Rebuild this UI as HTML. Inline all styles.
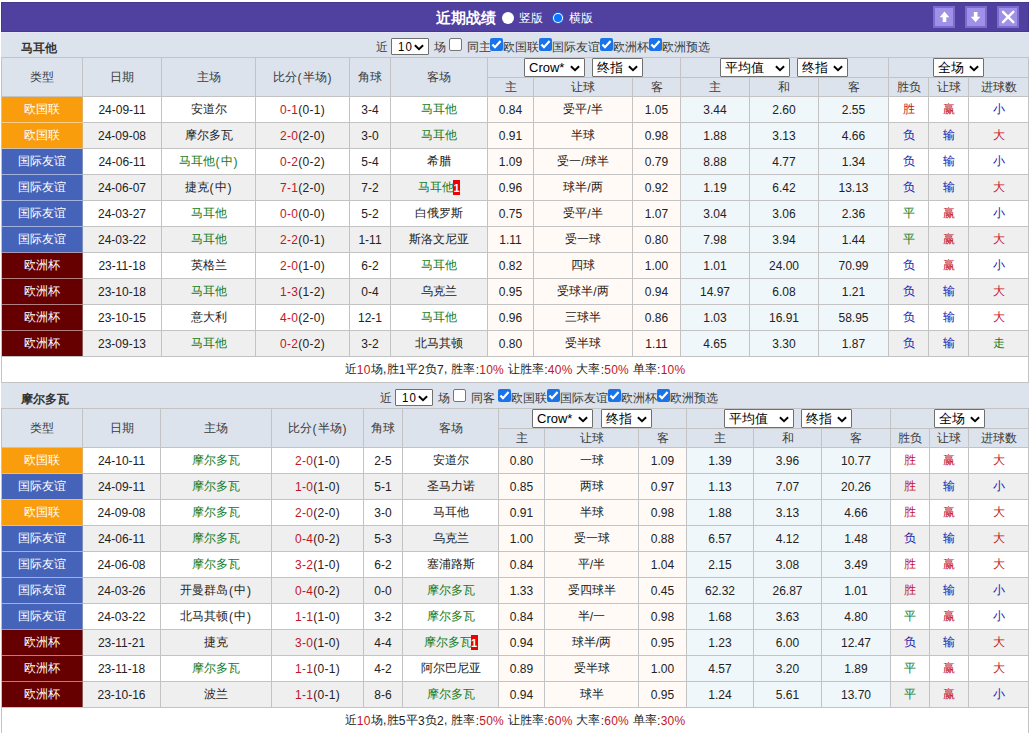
<!DOCTYPE html>
<html><head><meta charset="utf-8"><style>
html,body{margin:0;padding:0;background:#fff;width:1030px;height:733px;overflow:hidden}
body{position:relative;font-family:"Liberation Sans",sans-serif;font-size:12px;font-weight:500;color:#222222}
div{position:absolute;box-sizing:content-box}
.c{text-align:center;white-space:nowrap;overflow:hidden;font-weight:500}
.n{position:relative;top:1px}
.p{margin:0 0.9px}
.sc .n{letter-spacing:0.3px}
.r{color:#c2151f}
.g{color:#137a1a}
.b{color:#1818b0}
.badge{display:inline-block;background:#e00;color:#fff;font-weight:bold;font-size:11px;line-height:15px;width:7px;text-align:center;vertical-align:middle;margin-left:-1px}
.sel{background:#fff;border:1px solid #6f6f6f;border-radius:1px;color:#000;padding-left:4px;box-sizing:border-box;font-weight:400}
</style></head><body>
<div style="left:1px;top:2px;width:1028px;height:30px;background:#5040a0;box-shadow:inset 1px 1px 0 #45398e, inset -1px -1px 0 #45398e"></div><div style="left:1px;top:32px;width:1028px;height:1px;background:#e6e6f8"></div><div style="left:436px;top:8px;white-space:nowrap;color:#fff;font-weight:bold;font-size:15px;line-height:20px">近期战绩</div><div style="left:502px;top:12px;width:12px;height:12px;background:#fff;border-radius:50%"></div><div style="left:519px;top:9px;white-space:nowrap;color:#fff;font-size:12px;line-height:18px">竖版</div><div style="left:552px;top:12px;width:12px;height:12px;background:#2a62d8;border-radius:50%"><div style="left:1px;top:1px;width:10px;height:10px;border-radius:50%;background:#fff"></div><div style="left:2px;top:2px;width:8px;height:8px;border-radius:50%;background:#0a75ff"></div></div><div style="left:569px;top:9px;white-space:nowrap;color:#fff;font-size:12px;line-height:18px">横版</div><div style="left:933px;top:6px;width:22px;height:22px;background:#7a6bcc"><div style="left:2px;top:2px;width:18px;height:18px;background:#a090e8"></div><svg width="22" height="22" viewBox="0 0 22 22" style="position:absolute;left:0;top:0"><path d="M11.5 5.6 L16.3 11.2 L13.3 11.2 L13.3 16 L9.7 16 L9.7 11.2 L6.7 11.2 Z" fill="#fff"/></svg></div><div style="left:965px;top:6px;width:22px;height:22px;background:#7a6bcc"><div style="left:2px;top:2px;width:18px;height:18px;background:#a090e8"></div><svg width="22" height="22" viewBox="0 0 22 22" style="position:absolute;left:0;top:0"><path d="M10.6 16.2 L15.4 10.8 L12.5 10.8 L12.5 6 L8.8 6 L8.8 10.8 L5.8 10.8 Z" fill="#fff"/></svg></div><div style="left:997px;top:6px;width:22px;height:22px;background:#7a6bcc"><div style="left:2px;top:2px;width:18px;height:18px;background:#a090e8"></div><svg width="22" height="22" viewBox="0 0 22 22" style="position:absolute;left:0;top:0"><path d="M6 5.8 L16.3 16.2 M16.3 5.8 L6 16.2" fill="none" stroke="#fff" stroke-width="2.4" stroke-linecap="round"/></svg></div><div style="left:1px;top:33px;width:1028px;height:24px;background:#dce3ec"></div><div style="left:21px;top:38px;white-space:nowrap;font-weight:bold;font-size:12px;line-height:20px;color:#333">马耳他</div><div style="left:376px;top:38px;white-space:nowrap;font-size:12px;line-height:18px;color:#3a3a3a">近</div><div class="sel" style="left:391px;top:38px;width:38px;height:17px;font-size:13px;line-height:16px"><span style="display:inline-block;font-size:13px;letter-spacing:1.3px;transform:scaleX(0.88);transform-origin:0 50%;position:relative;left:2px">10</span><svg width="10" height="7" viewBox="0 0 10 7" style="position:absolute;right:4px;top:5px"><path d="M0.9 1.2 L5 5.2 L9.1 1.2" fill="none" stroke="#000" stroke-width="1.9"/></svg></div><div style="left:434px;top:38px;white-space:nowrap;font-size:12px;line-height:18px;color:#3a3a3a">场</div><div style="left:449px;top:38px;width:11px;height:11px;background:#fff;border:1px solid #767676;border-radius:2px"></div><div style="left:467px;top:38px;white-space:nowrap;font-size:12px;line-height:18px;color:#3a3a3a">同主</div><div style="left:490px;top:38px;width:13px;height:13px;background:#1a73e8;border-radius:2px"><svg width="13" height="13" viewBox="0 0 13 13" style="position:absolute;left:0;top:0"><path d="M2.4 6.4 L5 9.2 L10.6 3" fill="none" stroke="#fff" stroke-width="2.2"/></svg></div><div style="left:503px;top:38px;white-space:nowrap;font-size:12px;line-height:18px;color:#3a3a3a">欧国联</div><div style="left:539px;top:38px;width:13px;height:13px;background:#1a73e8;border-radius:2px"><svg width="13" height="13" viewBox="0 0 13 13" style="position:absolute;left:0;top:0"><path d="M2.4 6.4 L5 9.2 L10.6 3" fill="none" stroke="#fff" stroke-width="2.2"/></svg></div><div style="left:552px;top:38px;white-space:nowrap;font-size:12px;line-height:18px;color:#3a3a3a">国际友谊</div><div style="left:600px;top:38px;width:13px;height:13px;background:#1a73e8;border-radius:2px"><svg width="13" height="13" viewBox="0 0 13 13" style="position:absolute;left:0;top:0"><path d="M2.4 6.4 L5 9.2 L10.6 3" fill="none" stroke="#fff" stroke-width="2.2"/></svg></div><div style="left:613px;top:38px;white-space:nowrap;font-size:12px;line-height:18px;color:#3a3a3a">欧洲杯</div><div style="left:649px;top:38px;width:13px;height:13px;background:#1a73e8;border-radius:2px"><svg width="13" height="13" viewBox="0 0 13 13" style="position:absolute;left:0;top:0"><path d="M2.4 6.4 L5 9.2 L10.6 3" fill="none" stroke="#fff" stroke-width="2.2"/></svg></div><div style="left:662px;top:38px;white-space:nowrap;font-size:12px;line-height:18px;color:#3a3a3a">欧洲预选</div><div style="left:1px;top:57px;width:1027px;height:39px;background:#dce3ec"></div><div style="left:1px;top:96px;width:1027px;height:26px;background:#ffffff"></div><div style="left:488px;top:96px;width:192px;height:26px;background:#fffaf6"></div><div style="left:681px;top:96px;width:207px;height:26px;background:#f0f7fb"></div><div style="left:2px;top:97px;width:80px;height:25px;background:#fa9d0c"></div><div style="left:1px;top:122px;width:1027px;height:26px;background:#efefef"></div><div style="left:488px;top:122px;width:192px;height:26px;background:#fffaf6"></div><div style="left:681px;top:122px;width:207px;height:26px;background:#f0f7fb"></div><div style="left:2px;top:123px;width:80px;height:25px;background:#fa9d0c"></div><div style="left:1px;top:148px;width:1027px;height:26px;background:#ffffff"></div><div style="left:488px;top:148px;width:192px;height:26px;background:#fffaf6"></div><div style="left:681px;top:148px;width:207px;height:26px;background:#f0f7fb"></div><div style="left:2px;top:149px;width:80px;height:25px;background:#4563b9"></div><div style="left:1px;top:174px;width:1027px;height:26px;background:#efefef"></div><div style="left:488px;top:174px;width:192px;height:26px;background:#fffaf6"></div><div style="left:681px;top:174px;width:207px;height:26px;background:#f0f7fb"></div><div style="left:2px;top:175px;width:80px;height:25px;background:#4563b9"></div><div style="left:1px;top:200px;width:1027px;height:26px;background:#ffffff"></div><div style="left:488px;top:200px;width:192px;height:26px;background:#fffaf6"></div><div style="left:681px;top:200px;width:207px;height:26px;background:#f0f7fb"></div><div style="left:2px;top:201px;width:80px;height:25px;background:#4563b9"></div><div style="left:1px;top:226px;width:1027px;height:26px;background:#efefef"></div><div style="left:488px;top:226px;width:192px;height:26px;background:#fffaf6"></div><div style="left:681px;top:226px;width:207px;height:26px;background:#f0f7fb"></div><div style="left:2px;top:227px;width:80px;height:25px;background:#4563b9"></div><div style="left:1px;top:252px;width:1027px;height:26px;background:#ffffff"></div><div style="left:488px;top:252px;width:192px;height:26px;background:#fffaf6"></div><div style="left:681px;top:252px;width:207px;height:26px;background:#f0f7fb"></div><div style="left:2px;top:253px;width:80px;height:25px;background:#660000"></div><div style="left:1px;top:278px;width:1027px;height:26px;background:#efefef"></div><div style="left:488px;top:278px;width:192px;height:26px;background:#fffaf6"></div><div style="left:681px;top:278px;width:207px;height:26px;background:#f0f7fb"></div><div style="left:2px;top:279px;width:80px;height:25px;background:#660000"></div><div style="left:1px;top:304px;width:1027px;height:26px;background:#ffffff"></div><div style="left:488px;top:304px;width:192px;height:26px;background:#fffaf6"></div><div style="left:681px;top:304px;width:207px;height:26px;background:#f0f7fb"></div><div style="left:2px;top:305px;width:80px;height:25px;background:#660000"></div><div style="left:1px;top:330px;width:1027px;height:26px;background:#efefef"></div><div style="left:488px;top:330px;width:192px;height:26px;background:#fffaf6"></div><div style="left:681px;top:330px;width:207px;height:26px;background:#f0f7fb"></div><div style="left:2px;top:331px;width:80px;height:25px;background:#660000"></div><div style="left:1px;top:356px;width:1027px;height:26px;background:#fff"></div><div style="left:1px;top:57px;width:1028px;height:1px;background:#c3c3c3"></div><div style="left:487px;top:77px;width:542px;height:1px;background:#c3c3c3"></div><div style="left:1px;top:96px;width:1028px;height:1px;background:#c3c3c3"></div><div style="left:1px;top:122px;width:1028px;height:1px;background:#c3c3c3"></div><div style="left:1px;top:148px;width:1028px;height:1px;background:#c3c3c3"></div><div style="left:1px;top:174px;width:1028px;height:1px;background:#c3c3c3"></div><div style="left:1px;top:200px;width:1028px;height:1px;background:#c3c3c3"></div><div style="left:1px;top:226px;width:1028px;height:1px;background:#c3c3c3"></div><div style="left:1px;top:252px;width:1028px;height:1px;background:#c3c3c3"></div><div style="left:1px;top:278px;width:1028px;height:1px;background:#c3c3c3"></div><div style="left:1px;top:304px;width:1028px;height:1px;background:#c3c3c3"></div><div style="left:1px;top:330px;width:1028px;height:1px;background:#c3c3c3"></div><div style="left:1px;top:356px;width:1028px;height:1px;background:#c3c3c3"></div><div style="left:1px;top:382px;width:1028px;height:1px;background:#c3c3c3"></div><div style="left:1px;top:57px;width:1px;height:326px;background:#c3c3c3"></div><div style="left:82px;top:57px;width:1px;height:300px;background:#c3c3c3"></div><div style="left:161px;top:57px;width:1px;height:300px;background:#c3c3c3"></div><div style="left:255px;top:57px;width:1px;height:300px;background:#c3c3c3"></div><div style="left:349px;top:57px;width:1px;height:300px;background:#c3c3c3"></div><div style="left:390px;top:57px;width:1px;height:300px;background:#c3c3c3"></div><div style="left:487px;top:57px;width:1px;height:300px;background:#c3c3c3"></div><div style="left:533px;top:77px;width:1px;height:280px;background:#c3c3c3"></div><div style="left:632px;top:77px;width:1px;height:280px;background:#c3c3c3"></div><div style="left:680px;top:57px;width:1px;height:300px;background:#c3c3c3"></div><div style="left:749px;top:77px;width:1px;height:280px;background:#c3c3c3"></div><div style="left:818px;top:77px;width:1px;height:280px;background:#c3c3c3"></div><div style="left:888px;top:57px;width:1px;height:300px;background:#c3c3c3"></div><div style="left:928px;top:77px;width:1px;height:280px;background:#c3c3c3"></div><div style="left:968px;top:77px;width:1px;height:280px;background:#c3c3c3"></div><div style="left:1028px;top:57px;width:1px;height:326px;background:#c3c3c3"></div><div style="left:82px;top:97px;width:1px;height:25px;background:#e1ae5e"></div><div style="left:82px;top:123px;width:1px;height:25px;background:#e1ae5e"></div><div style="left:2px;top:122px;width:81px;height:1px;background:#fcce86"></div><div style="left:82px;top:149px;width:1px;height:25px;background:#7e8ebe"></div><div style="left:2px;top:148px;width:81px;height:1px;background:#d0c0b0"></div><div style="left:82px;top:175px;width:1px;height:25px;background:#7e8ebe"></div><div style="left:2px;top:174px;width:81px;height:1px;background:#a2b1dc"></div><div style="left:82px;top:201px;width:1px;height:25px;background:#7e8ebe"></div><div style="left:2px;top:200px;width:81px;height:1px;background:#a2b1dc"></div><div style="left:82px;top:227px;width:1px;height:25px;background:#7e8ebe"></div><div style="left:2px;top:226px;width:81px;height:1px;background:#a2b1dc"></div><div style="left:82px;top:253px;width:1px;height:25px;background:#905858"></div><div style="left:2px;top:252px;width:81px;height:1px;background:#aa98ae"></div><div style="left:82px;top:279px;width:1px;height:25px;background:#905858"></div><div style="left:2px;top:278px;width:81px;height:1px;background:#b28080"></div><div style="left:82px;top:305px;width:1px;height:25px;background:#905858"></div><div style="left:2px;top:304px;width:81px;height:1px;background:#b28080"></div><div style="left:82px;top:331px;width:1px;height:25px;background:#905858"></div><div style="left:2px;top:330px;width:81px;height:1px;background:#b28080"></div><div class="c" style="left:2px;top:58px;width:80px;height:38px;line-height:38px;color:#3a3a3a">类型</div><div class="c" style="left:83px;top:58px;width:78px;height:38px;line-height:38px;color:#3a3a3a">日期</div><div class="c" style="left:162px;top:58px;width:93px;height:38px;line-height:38px;color:#3a3a3a">主场</div><div class="c" style="left:256px;top:58px;width:93px;height:38px;line-height:38px;color:#3a3a3a">比分<span class="p"><span class="n">(</span></span>半场<span class="p"><span class="n">)</span></span></div><div class="c" style="left:350px;top:58px;width:40px;height:38px;line-height:38px;color:#3a3a3a">角球</div><div class="c" style="left:391px;top:58px;width:96px;height:38px;line-height:38px;color:#3a3a3a">客场</div><div class="c" style="left:488px;top:78px;width:45px;height:18px;line-height:18px;color:#3a3a3a">主</div><div class="c" style="left:534px;top:78px;width:98px;height:18px;line-height:18px;color:#3a3a3a">让球</div><div class="c" style="left:633px;top:78px;width:47px;height:18px;line-height:18px;color:#3a3a3a">客</div><div class="c" style="left:681px;top:78px;width:68px;height:18px;line-height:18px;color:#3a3a3a">主</div><div class="c" style="left:750px;top:78px;width:68px;height:18px;line-height:18px;color:#3a3a3a">和</div><div class="c" style="left:819px;top:78px;width:69px;height:18px;line-height:18px;color:#3a3a3a">客</div><div class="c" style="left:889px;top:78px;width:39px;height:18px;line-height:18px;color:#3a3a3a">胜负</div><div class="c" style="left:929px;top:78px;width:39px;height:18px;line-height:18px;color:#3a3a3a">让球</div><div class="c" style="left:969px;top:78px;width:59px;height:18px;line-height:18px;color:#3a3a3a">进球数</div><div class="c" style="left:2px;top:97px;width:80px;height:25px;line-height:25px;color:#fff">欧国联</div><div class="c" style="left:83px;top:97px;width:78px;height:25px;line-height:25px;"><span class="n">24-09-11</span></div><div class="c" style="left:162px;top:97px;width:93px;height:25px;line-height:25px;">安道尔</div><div class="c" style="left:256px;top:97px;width:93px;height:25px;line-height:25px;"><span class="sc"><span class="r"><span class="n">0-1</span></span><span class="n">(0-1)</span></span></div><div class="c" style="left:350px;top:97px;width:40px;height:25px;line-height:25px;"><span class="n">3-4</span></div><div class="c" style="left:391px;top:97px;width:96px;height:25px;line-height:25px;"><span class="g">马耳他</span></div><div class="c" style="left:488px;top:97px;width:45px;height:25px;line-height:25px;"><span class="n">0.84</span></div><div class="c" style="left:534px;top:97px;width:98px;height:25px;line-height:25px;">受平<span class="n">/</span>半</div><div class="c" style="left:633px;top:97px;width:47px;height:25px;line-height:25px;"><span class="n">1.05</span></div><div class="c" style="left:681px;top:97px;width:68px;height:25px;line-height:25px;"><span class="n">3.44</span></div><div class="c" style="left:750px;top:97px;width:68px;height:25px;line-height:25px;"><span class="n">2.60</span></div><div class="c" style="left:819px;top:97px;width:69px;height:25px;line-height:25px;"><span class="n">2.55</span></div><div class="c" style="left:889px;top:97px;width:39px;height:25px;line-height:25px;"><span class="r">胜</span></div><div class="c" style="left:929px;top:97px;width:39px;height:25px;line-height:25px;"><span class="r">赢</span></div><div class="c" style="left:969px;top:97px;width:59px;height:25px;line-height:25px;"><span class="b">小</span></div><div class="c" style="left:2px;top:123px;width:80px;height:25px;line-height:25px;color:#fff">欧国联</div><div class="c" style="left:83px;top:123px;width:78px;height:25px;line-height:25px;"><span class="n">24-09-08</span></div><div class="c" style="left:162px;top:123px;width:93px;height:25px;line-height:25px;">摩尔多瓦</div><div class="c" style="left:256px;top:123px;width:93px;height:25px;line-height:25px;"><span class="sc"><span class="r"><span class="n">2-0</span></span><span class="n">(2-0)</span></span></div><div class="c" style="left:350px;top:123px;width:40px;height:25px;line-height:25px;"><span class="n">3-0</span></div><div class="c" style="left:391px;top:123px;width:96px;height:25px;line-height:25px;"><span class="g">马耳他</span></div><div class="c" style="left:488px;top:123px;width:45px;height:25px;line-height:25px;"><span class="n">0.91</span></div><div class="c" style="left:534px;top:123px;width:98px;height:25px;line-height:25px;">半球</div><div class="c" style="left:633px;top:123px;width:47px;height:25px;line-height:25px;"><span class="n">0.98</span></div><div class="c" style="left:681px;top:123px;width:68px;height:25px;line-height:25px;"><span class="n">1.88</span></div><div class="c" style="left:750px;top:123px;width:68px;height:25px;line-height:25px;"><span class="n">3.13</span></div><div class="c" style="left:819px;top:123px;width:69px;height:25px;line-height:25px;"><span class="n">4.66</span></div><div class="c" style="left:889px;top:123px;width:39px;height:25px;line-height:25px;"><span class="b">负</span></div><div class="c" style="left:929px;top:123px;width:39px;height:25px;line-height:25px;"><span class="b">输</span></div><div class="c" style="left:969px;top:123px;width:59px;height:25px;line-height:25px;"><span class="r">大</span></div><div class="c" style="left:2px;top:149px;width:80px;height:25px;line-height:25px;color:#fff">国际友谊</div><div class="c" style="left:83px;top:149px;width:78px;height:25px;line-height:25px;"><span class="n">24-06-11</span></div><div class="c" style="left:162px;top:149px;width:93px;height:25px;line-height:25px;"><span class="g">马耳他<span class="p"><span class="n">(</span></span>中<span class="p"><span class="n">)</span></span></span></div><div class="c" style="left:256px;top:149px;width:93px;height:25px;line-height:25px;"><span class="sc"><span class="r"><span class="n">0-2</span></span><span class="n">(0-2)</span></span></div><div class="c" style="left:350px;top:149px;width:40px;height:25px;line-height:25px;"><span class="n">5-4</span></div><div class="c" style="left:391px;top:149px;width:96px;height:25px;line-height:25px;">希腊</div><div class="c" style="left:488px;top:149px;width:45px;height:25px;line-height:25px;"><span class="n">1.09</span></div><div class="c" style="left:534px;top:149px;width:98px;height:25px;line-height:25px;">受一<span class="n">/</span>球半</div><div class="c" style="left:633px;top:149px;width:47px;height:25px;line-height:25px;"><span class="n">0.79</span></div><div class="c" style="left:681px;top:149px;width:68px;height:25px;line-height:25px;"><span class="n">8.88</span></div><div class="c" style="left:750px;top:149px;width:68px;height:25px;line-height:25px;"><span class="n">4.77</span></div><div class="c" style="left:819px;top:149px;width:69px;height:25px;line-height:25px;"><span class="n">1.34</span></div><div class="c" style="left:889px;top:149px;width:39px;height:25px;line-height:25px;"><span class="b">负</span></div><div class="c" style="left:929px;top:149px;width:39px;height:25px;line-height:25px;"><span class="b">输</span></div><div class="c" style="left:969px;top:149px;width:59px;height:25px;line-height:25px;"><span class="b">小</span></div><div class="c" style="left:2px;top:175px;width:80px;height:25px;line-height:25px;color:#fff">国际友谊</div><div class="c" style="left:83px;top:175px;width:78px;height:25px;line-height:25px;"><span class="n">24-06-07</span></div><div class="c" style="left:162px;top:175px;width:93px;height:25px;line-height:25px;">捷克<span class="p"><span class="n">(</span></span>中<span class="p"><span class="n">)</span></span></div><div class="c" style="left:256px;top:175px;width:93px;height:25px;line-height:25px;"><span class="sc"><span class="r"><span class="n">7-1</span></span><span class="n">(2-0)</span></span></div><div class="c" style="left:350px;top:175px;width:40px;height:25px;line-height:25px;"><span class="n">7-2</span></div><div class="c" style="left:391px;top:175px;width:96px;height:25px;line-height:25px;"><span class="g">马耳他</span><span class="badge"><span class="n">1</span></span></div><div class="c" style="left:488px;top:175px;width:45px;height:25px;line-height:25px;"><span class="n">0.96</span></div><div class="c" style="left:534px;top:175px;width:98px;height:25px;line-height:25px;">球半<span class="n">/</span>两</div><div class="c" style="left:633px;top:175px;width:47px;height:25px;line-height:25px;"><span class="n">0.92</span></div><div class="c" style="left:681px;top:175px;width:68px;height:25px;line-height:25px;"><span class="n">1.19</span></div><div class="c" style="left:750px;top:175px;width:68px;height:25px;line-height:25px;"><span class="n">6.42</span></div><div class="c" style="left:819px;top:175px;width:69px;height:25px;line-height:25px;"><span class="n">13.13</span></div><div class="c" style="left:889px;top:175px;width:39px;height:25px;line-height:25px;"><span class="b">负</span></div><div class="c" style="left:929px;top:175px;width:39px;height:25px;line-height:25px;"><span class="b">输</span></div><div class="c" style="left:969px;top:175px;width:59px;height:25px;line-height:25px;"><span class="r">大</span></div><div class="c" style="left:2px;top:201px;width:80px;height:25px;line-height:25px;color:#fff">国际友谊</div><div class="c" style="left:83px;top:201px;width:78px;height:25px;line-height:25px;"><span class="n">24-03-27</span></div><div class="c" style="left:162px;top:201px;width:93px;height:25px;line-height:25px;"><span class="g">马耳他</span></div><div class="c" style="left:256px;top:201px;width:93px;height:25px;line-height:25px;"><span class="sc"><span class="r"><span class="n">0-0</span></span><span class="n">(0-0)</span></span></div><div class="c" style="left:350px;top:201px;width:40px;height:25px;line-height:25px;"><span class="n">5-2</span></div><div class="c" style="left:391px;top:201px;width:96px;height:25px;line-height:25px;">白俄罗斯</div><div class="c" style="left:488px;top:201px;width:45px;height:25px;line-height:25px;"><span class="n">0.75</span></div><div class="c" style="left:534px;top:201px;width:98px;height:25px;line-height:25px;">受平<span class="n">/</span>半</div><div class="c" style="left:633px;top:201px;width:47px;height:25px;line-height:25px;"><span class="n">1.07</span></div><div class="c" style="left:681px;top:201px;width:68px;height:25px;line-height:25px;"><span class="n">3.04</span></div><div class="c" style="left:750px;top:201px;width:68px;height:25px;line-height:25px;"><span class="n">3.06</span></div><div class="c" style="left:819px;top:201px;width:69px;height:25px;line-height:25px;"><span class="n">2.36</span></div><div class="c" style="left:889px;top:201px;width:39px;height:25px;line-height:25px;"><span class="g">平</span></div><div class="c" style="left:929px;top:201px;width:39px;height:25px;line-height:25px;"><span class="r">赢</span></div><div class="c" style="left:969px;top:201px;width:59px;height:25px;line-height:25px;"><span class="b">小</span></div><div class="c" style="left:2px;top:227px;width:80px;height:25px;line-height:25px;color:#fff">国际友谊</div><div class="c" style="left:83px;top:227px;width:78px;height:25px;line-height:25px;"><span class="n">24-03-22</span></div><div class="c" style="left:162px;top:227px;width:93px;height:25px;line-height:25px;"><span class="g">马耳他</span></div><div class="c" style="left:256px;top:227px;width:93px;height:25px;line-height:25px;"><span class="sc"><span class="r"><span class="n">2-2</span></span><span class="n">(0-1)</span></span></div><div class="c" style="left:350px;top:227px;width:40px;height:25px;line-height:25px;"><span class="n">1-11</span></div><div class="c" style="left:391px;top:227px;width:96px;height:25px;line-height:25px;">斯洛文尼亚</div><div class="c" style="left:488px;top:227px;width:45px;height:25px;line-height:25px;"><span class="n">1.11</span></div><div class="c" style="left:534px;top:227px;width:98px;height:25px;line-height:25px;">受一球</div><div class="c" style="left:633px;top:227px;width:47px;height:25px;line-height:25px;"><span class="n">0.80</span></div><div class="c" style="left:681px;top:227px;width:68px;height:25px;line-height:25px;"><span class="n">7.98</span></div><div class="c" style="left:750px;top:227px;width:68px;height:25px;line-height:25px;"><span class="n">3.94</span></div><div class="c" style="left:819px;top:227px;width:69px;height:25px;line-height:25px;"><span class="n">1.44</span></div><div class="c" style="left:889px;top:227px;width:39px;height:25px;line-height:25px;"><span class="g">平</span></div><div class="c" style="left:929px;top:227px;width:39px;height:25px;line-height:25px;"><span class="r">赢</span></div><div class="c" style="left:969px;top:227px;width:59px;height:25px;line-height:25px;"><span class="r">大</span></div><div class="c" style="left:2px;top:253px;width:80px;height:25px;line-height:25px;color:#fff">欧洲杯</div><div class="c" style="left:83px;top:253px;width:78px;height:25px;line-height:25px;"><span class="n">23-11-18</span></div><div class="c" style="left:162px;top:253px;width:93px;height:25px;line-height:25px;">英格兰</div><div class="c" style="left:256px;top:253px;width:93px;height:25px;line-height:25px;"><span class="sc"><span class="r"><span class="n">2-0</span></span><span class="n">(1-0)</span></span></div><div class="c" style="left:350px;top:253px;width:40px;height:25px;line-height:25px;"><span class="n">6-2</span></div><div class="c" style="left:391px;top:253px;width:96px;height:25px;line-height:25px;"><span class="g">马耳他</span></div><div class="c" style="left:488px;top:253px;width:45px;height:25px;line-height:25px;"><span class="n">0.82</span></div><div class="c" style="left:534px;top:253px;width:98px;height:25px;line-height:25px;">四球</div><div class="c" style="left:633px;top:253px;width:47px;height:25px;line-height:25px;"><span class="n">1.00</span></div><div class="c" style="left:681px;top:253px;width:68px;height:25px;line-height:25px;"><span class="n">1.01</span></div><div class="c" style="left:750px;top:253px;width:68px;height:25px;line-height:25px;"><span class="n">24.00</span></div><div class="c" style="left:819px;top:253px;width:69px;height:25px;line-height:25px;"><span class="n">70.99</span></div><div class="c" style="left:889px;top:253px;width:39px;height:25px;line-height:25px;"><span class="b">负</span></div><div class="c" style="left:929px;top:253px;width:39px;height:25px;line-height:25px;"><span class="r">赢</span></div><div class="c" style="left:969px;top:253px;width:59px;height:25px;line-height:25px;"><span class="b">小</span></div><div class="c" style="left:2px;top:279px;width:80px;height:25px;line-height:25px;color:#fff">欧洲杯</div><div class="c" style="left:83px;top:279px;width:78px;height:25px;line-height:25px;"><span class="n">23-10-18</span></div><div class="c" style="left:162px;top:279px;width:93px;height:25px;line-height:25px;"><span class="g">马耳他</span></div><div class="c" style="left:256px;top:279px;width:93px;height:25px;line-height:25px;"><span class="sc"><span class="r"><span class="n">1-3</span></span><span class="n">(1-2)</span></span></div><div class="c" style="left:350px;top:279px;width:40px;height:25px;line-height:25px;"><span class="n">0-4</span></div><div class="c" style="left:391px;top:279px;width:96px;height:25px;line-height:25px;">乌克兰</div><div class="c" style="left:488px;top:279px;width:45px;height:25px;line-height:25px;"><span class="n">0.95</span></div><div class="c" style="left:534px;top:279px;width:98px;height:25px;line-height:25px;">受球半<span class="n">/</span>两</div><div class="c" style="left:633px;top:279px;width:47px;height:25px;line-height:25px;"><span class="n">0.94</span></div><div class="c" style="left:681px;top:279px;width:68px;height:25px;line-height:25px;"><span class="n">14.97</span></div><div class="c" style="left:750px;top:279px;width:68px;height:25px;line-height:25px;"><span class="n">6.08</span></div><div class="c" style="left:819px;top:279px;width:69px;height:25px;line-height:25px;"><span class="n">1.21</span></div><div class="c" style="left:889px;top:279px;width:39px;height:25px;line-height:25px;"><span class="b">负</span></div><div class="c" style="left:929px;top:279px;width:39px;height:25px;line-height:25px;"><span class="b">输</span></div><div class="c" style="left:969px;top:279px;width:59px;height:25px;line-height:25px;"><span class="r">大</span></div><div class="c" style="left:2px;top:305px;width:80px;height:25px;line-height:25px;color:#fff">欧洲杯</div><div class="c" style="left:83px;top:305px;width:78px;height:25px;line-height:25px;"><span class="n">23-10-15</span></div><div class="c" style="left:162px;top:305px;width:93px;height:25px;line-height:25px;">意大利</div><div class="c" style="left:256px;top:305px;width:93px;height:25px;line-height:25px;"><span class="sc"><span class="r"><span class="n">4-0</span></span><span class="n">(2-0)</span></span></div><div class="c" style="left:350px;top:305px;width:40px;height:25px;line-height:25px;"><span class="n">12-1</span></div><div class="c" style="left:391px;top:305px;width:96px;height:25px;line-height:25px;"><span class="g">马耳他</span></div><div class="c" style="left:488px;top:305px;width:45px;height:25px;line-height:25px;"><span class="n">0.96</span></div><div class="c" style="left:534px;top:305px;width:98px;height:25px;line-height:25px;">三球半</div><div class="c" style="left:633px;top:305px;width:47px;height:25px;line-height:25px;"><span class="n">0.86</span></div><div class="c" style="left:681px;top:305px;width:68px;height:25px;line-height:25px;"><span class="n">1.03</span></div><div class="c" style="left:750px;top:305px;width:68px;height:25px;line-height:25px;"><span class="n">16.91</span></div><div class="c" style="left:819px;top:305px;width:69px;height:25px;line-height:25px;"><span class="n">58.95</span></div><div class="c" style="left:889px;top:305px;width:39px;height:25px;line-height:25px;"><span class="b">负</span></div><div class="c" style="left:929px;top:305px;width:39px;height:25px;line-height:25px;"><span class="b">输</span></div><div class="c" style="left:969px;top:305px;width:59px;height:25px;line-height:25px;"><span class="r">大</span></div><div class="c" style="left:2px;top:331px;width:80px;height:25px;line-height:25px;color:#fff">欧洲杯</div><div class="c" style="left:83px;top:331px;width:78px;height:25px;line-height:25px;"><span class="n">23-09-13</span></div><div class="c" style="left:162px;top:331px;width:93px;height:25px;line-height:25px;"><span class="g">马耳他</span></div><div class="c" style="left:256px;top:331px;width:93px;height:25px;line-height:25px;"><span class="sc"><span class="r"><span class="n">0-2</span></span><span class="n">(0-2)</span></span></div><div class="c" style="left:350px;top:331px;width:40px;height:25px;line-height:25px;"><span class="n">3-2</span></div><div class="c" style="left:391px;top:331px;width:96px;height:25px;line-height:25px;">北马其顿</div><div class="c" style="left:488px;top:331px;width:45px;height:25px;line-height:25px;"><span class="n">0.80</span></div><div class="c" style="left:534px;top:331px;width:98px;height:25px;line-height:25px;">受半球</div><div class="c" style="left:633px;top:331px;width:47px;height:25px;line-height:25px;"><span class="n">1.11</span></div><div class="c" style="left:681px;top:331px;width:68px;height:25px;line-height:25px;"><span class="n">4.65</span></div><div class="c" style="left:750px;top:331px;width:68px;height:25px;line-height:25px;"><span class="n">3.30</span></div><div class="c" style="left:819px;top:331px;width:69px;height:25px;line-height:25px;"><span class="n">1.87</span></div><div class="c" style="left:889px;top:331px;width:39px;height:25px;line-height:25px;"><span class="b">负</span></div><div class="c" style="left:929px;top:331px;width:39px;height:25px;line-height:25px;"><span class="b">输</span></div><div class="c" style="left:969px;top:331px;width:59px;height:25px;line-height:25px;"><span class="g">走</span></div><div class="c" style="left:2px;top:357px;width:1026px;height:25px;line-height:25px;letter-spacing:0.24px">近<span class="r"><span class="n">10</span></span>场,胜<span class="n">1</span>平<span class="n">2</span>负<span class="n">7</span>, 胜率<span class="n">:</span><span class="r"><span class="n">10%</span></span> 让胜率<span class="n">:</span><span class="r"><span class="n">40%</span></span> 大率<span class="n">:</span><span class="r"><span class="n">50%</span></span> 单率<span class="n">:</span><span class="r"><span class="n">10%</span></span></div><div class="sel" style="left:524px;top:58px;width:61px;height:19px;font-size:13px;line-height:18px">Crow*<svg width="10" height="7" viewBox="0 0 10 7" style="position:absolute;right:4px;top:6px"><path d="M0.9 1.2 L5 5.2 L9.1 1.2" fill="none" stroke="#000" stroke-width="1.9"/></svg></div><div class="sel" style="left:592px;top:58px;width:51px;height:19px;font-size:13px;line-height:18px">终指<svg width="10" height="7" viewBox="0 0 10 7" style="position:absolute;right:4px;top:6px"><path d="M0.9 1.2 L5 5.2 L9.1 1.2" fill="none" stroke="#000" stroke-width="1.9"/></svg></div><div class="sel" style="left:720px;top:58px;width:70px;height:19px;font-size:13px;line-height:18px">平均值&nbsp;<svg width="10" height="7" viewBox="0 0 10 7" style="position:absolute;right:4px;top:6px"><path d="M0.9 1.2 L5 5.2 L9.1 1.2" fill="none" stroke="#000" stroke-width="1.9"/></svg></div><div class="sel" style="left:797px;top:58px;width:51px;height:19px;font-size:13px;line-height:18px">终指<svg width="10" height="7" viewBox="0 0 10 7" style="position:absolute;right:4px;top:6px"><path d="M0.9 1.2 L5 5.2 L9.1 1.2" fill="none" stroke="#000" stroke-width="1.9"/></svg></div><div class="sel" style="left:933px;top:58px;width:51px;height:19px;font-size:13px;line-height:18px">全场<svg width="10" height="7" viewBox="0 0 10 7" style="position:absolute;right:4px;top:6px"><path d="M0.9 1.2 L5 5.2 L9.1 1.2" fill="none" stroke="#000" stroke-width="1.9"/></svg></div><div style="left:1px;top:383px;width:1028px;height:25px;background:#dce3ec"></div><div style="left:21px;top:389px;white-space:nowrap;font-weight:bold;font-size:12px;line-height:20px;color:#333">摩尔多瓦</div><div style="left:380px;top:389px;white-space:nowrap;font-size:12px;line-height:18px;color:#3a3a3a">近</div><div class="sel" style="left:395px;top:389px;width:38px;height:17px;font-size:13px;line-height:16px"><span style="display:inline-block;font-size:13px;letter-spacing:1.3px;transform:scaleX(0.88);transform-origin:0 50%;position:relative;left:2px">10</span><svg width="10" height="7" viewBox="0 0 10 7" style="position:absolute;right:4px;top:5px"><path d="M0.9 1.2 L5 5.2 L9.1 1.2" fill="none" stroke="#000" stroke-width="1.9"/></svg></div><div style="left:438px;top:389px;white-space:nowrap;font-size:12px;line-height:18px;color:#3a3a3a">场</div><div style="left:453px;top:389px;width:11px;height:11px;background:#fff;border:1px solid #767676;border-radius:2px"></div><div style="left:471px;top:389px;white-space:nowrap;font-size:12px;line-height:18px;color:#3a3a3a">同客</div><div style="left:498px;top:389px;width:13px;height:13px;background:#1a73e8;border-radius:2px"><svg width="13" height="13" viewBox="0 0 13 13" style="position:absolute;left:0;top:0"><path d="M2.4 6.4 L5 9.2 L10.6 3" fill="none" stroke="#fff" stroke-width="2.2"/></svg></div><div style="left:511px;top:389px;white-space:nowrap;font-size:12px;line-height:18px;color:#3a3a3a">欧国联</div><div style="left:547px;top:389px;width:13px;height:13px;background:#1a73e8;border-radius:2px"><svg width="13" height="13" viewBox="0 0 13 13" style="position:absolute;left:0;top:0"><path d="M2.4 6.4 L5 9.2 L10.6 3" fill="none" stroke="#fff" stroke-width="2.2"/></svg></div><div style="left:560px;top:389px;white-space:nowrap;font-size:12px;line-height:18px;color:#3a3a3a">国际友谊</div><div style="left:608px;top:389px;width:13px;height:13px;background:#1a73e8;border-radius:2px"><svg width="13" height="13" viewBox="0 0 13 13" style="position:absolute;left:0;top:0"><path d="M2.4 6.4 L5 9.2 L10.6 3" fill="none" stroke="#fff" stroke-width="2.2"/></svg></div><div style="left:621px;top:389px;white-space:nowrap;font-size:12px;line-height:18px;color:#3a3a3a">欧洲杯</div><div style="left:657px;top:389px;width:13px;height:13px;background:#1a73e8;border-radius:2px"><svg width="13" height="13" viewBox="0 0 13 13" style="position:absolute;left:0;top:0"><path d="M2.4 6.4 L5 9.2 L10.6 3" fill="none" stroke="#fff" stroke-width="2.2"/></svg></div><div style="left:670px;top:389px;white-space:nowrap;font-size:12px;line-height:18px;color:#3a3a3a">欧洲预选</div><div style="left:1px;top:408px;width:1027px;height:39px;background:#dce3ec"></div><div style="left:1px;top:447px;width:1027px;height:26px;background:#ffffff"></div><div style="left:499px;top:447px;width:187px;height:26px;background:#fffaf6"></div><div style="left:687px;top:447px;width:203px;height:26px;background:#f0f7fb"></div><div style="left:2px;top:448px;width:80px;height:25px;background:#fa9d0c"></div><div style="left:1px;top:473px;width:1027px;height:26px;background:#efefef"></div><div style="left:499px;top:473px;width:187px;height:26px;background:#fffaf6"></div><div style="left:687px;top:473px;width:203px;height:26px;background:#f0f7fb"></div><div style="left:2px;top:474px;width:80px;height:25px;background:#4563b9"></div><div style="left:1px;top:499px;width:1027px;height:26px;background:#ffffff"></div><div style="left:499px;top:499px;width:187px;height:26px;background:#fffaf6"></div><div style="left:687px;top:499px;width:203px;height:26px;background:#f0f7fb"></div><div style="left:2px;top:500px;width:80px;height:25px;background:#fa9d0c"></div><div style="left:1px;top:525px;width:1027px;height:26px;background:#efefef"></div><div style="left:499px;top:525px;width:187px;height:26px;background:#fffaf6"></div><div style="left:687px;top:525px;width:203px;height:26px;background:#f0f7fb"></div><div style="left:2px;top:526px;width:80px;height:25px;background:#4563b9"></div><div style="left:1px;top:551px;width:1027px;height:26px;background:#ffffff"></div><div style="left:499px;top:551px;width:187px;height:26px;background:#fffaf6"></div><div style="left:687px;top:551px;width:203px;height:26px;background:#f0f7fb"></div><div style="left:2px;top:552px;width:80px;height:25px;background:#4563b9"></div><div style="left:1px;top:577px;width:1027px;height:26px;background:#efefef"></div><div style="left:499px;top:577px;width:187px;height:26px;background:#fffaf6"></div><div style="left:687px;top:577px;width:203px;height:26px;background:#f0f7fb"></div><div style="left:2px;top:578px;width:80px;height:25px;background:#4563b9"></div><div style="left:1px;top:603px;width:1027px;height:26px;background:#ffffff"></div><div style="left:499px;top:603px;width:187px;height:26px;background:#fffaf6"></div><div style="left:687px;top:603px;width:203px;height:26px;background:#f0f7fb"></div><div style="left:2px;top:604px;width:80px;height:25px;background:#4563b9"></div><div style="left:1px;top:629px;width:1027px;height:26px;background:#efefef"></div><div style="left:499px;top:629px;width:187px;height:26px;background:#fffaf6"></div><div style="left:687px;top:629px;width:203px;height:26px;background:#f0f7fb"></div><div style="left:2px;top:630px;width:80px;height:25px;background:#660000"></div><div style="left:1px;top:655px;width:1027px;height:26px;background:#ffffff"></div><div style="left:499px;top:655px;width:187px;height:26px;background:#fffaf6"></div><div style="left:687px;top:655px;width:203px;height:26px;background:#f0f7fb"></div><div style="left:2px;top:656px;width:80px;height:25px;background:#660000"></div><div style="left:1px;top:681px;width:1027px;height:26px;background:#efefef"></div><div style="left:499px;top:681px;width:187px;height:26px;background:#fffaf6"></div><div style="left:687px;top:681px;width:203px;height:26px;background:#f0f7fb"></div><div style="left:2px;top:682px;width:80px;height:25px;background:#660000"></div><div style="left:1px;top:707px;width:1027px;height:26px;background:#fff"></div><div style="left:1px;top:408px;width:1028px;height:1px;background:#c3c3c3"></div><div style="left:498px;top:428px;width:531px;height:1px;background:#c3c3c3"></div><div style="left:1px;top:447px;width:1028px;height:1px;background:#c3c3c3"></div><div style="left:1px;top:473px;width:1028px;height:1px;background:#c3c3c3"></div><div style="left:1px;top:499px;width:1028px;height:1px;background:#c3c3c3"></div><div style="left:1px;top:525px;width:1028px;height:1px;background:#c3c3c3"></div><div style="left:1px;top:551px;width:1028px;height:1px;background:#c3c3c3"></div><div style="left:1px;top:577px;width:1028px;height:1px;background:#c3c3c3"></div><div style="left:1px;top:603px;width:1028px;height:1px;background:#c3c3c3"></div><div style="left:1px;top:629px;width:1028px;height:1px;background:#c3c3c3"></div><div style="left:1px;top:655px;width:1028px;height:1px;background:#c3c3c3"></div><div style="left:1px;top:681px;width:1028px;height:1px;background:#c3c3c3"></div><div style="left:1px;top:707px;width:1028px;height:1px;background:#c3c3c3"></div><div style="left:1px;top:733px;width:1028px;height:1px;background:#c3c3c3"></div><div style="left:1px;top:408px;width:1px;height:326px;background:#c3c3c3"></div><div style="left:82px;top:408px;width:1px;height:300px;background:#c3c3c3"></div><div style="left:160px;top:408px;width:1px;height:300px;background:#c3c3c3"></div><div style="left:271px;top:408px;width:1px;height:300px;background:#c3c3c3"></div><div style="left:363px;top:408px;width:1px;height:300px;background:#c3c3c3"></div><div style="left:402px;top:408px;width:1px;height:300px;background:#c3c3c3"></div><div style="left:498px;top:408px;width:1px;height:300px;background:#c3c3c3"></div><div style="left:544px;top:428px;width:1px;height:280px;background:#c3c3c3"></div><div style="left:638px;top:428px;width:1px;height:280px;background:#c3c3c3"></div><div style="left:686px;top:408px;width:1px;height:300px;background:#c3c3c3"></div><div style="left:753px;top:428px;width:1px;height:280px;background:#c3c3c3"></div><div style="left:821px;top:428px;width:1px;height:280px;background:#c3c3c3"></div><div style="left:890px;top:408px;width:1px;height:300px;background:#c3c3c3"></div><div style="left:929px;top:428px;width:1px;height:280px;background:#c3c3c3"></div><div style="left:968px;top:428px;width:1px;height:280px;background:#c3c3c3"></div><div style="left:1028px;top:408px;width:1px;height:326px;background:#c3c3c3"></div><div style="left:82px;top:448px;width:1px;height:25px;background:#e1ae5e"></div><div style="left:82px;top:474px;width:1px;height:25px;background:#7e8ebe"></div><div style="left:2px;top:473px;width:81px;height:1px;background:#d0c0b0"></div><div style="left:82px;top:500px;width:1px;height:25px;background:#e1ae5e"></div><div style="left:2px;top:499px;width:81px;height:1px;background:#d0c0b0"></div><div style="left:82px;top:526px;width:1px;height:25px;background:#7e8ebe"></div><div style="left:2px;top:525px;width:81px;height:1px;background:#d0c0b0"></div><div style="left:82px;top:552px;width:1px;height:25px;background:#7e8ebe"></div><div style="left:2px;top:551px;width:81px;height:1px;background:#a2b1dc"></div><div style="left:82px;top:578px;width:1px;height:25px;background:#7e8ebe"></div><div style="left:2px;top:577px;width:81px;height:1px;background:#a2b1dc"></div><div style="left:82px;top:604px;width:1px;height:25px;background:#7e8ebe"></div><div style="left:2px;top:603px;width:81px;height:1px;background:#a2b1dc"></div><div style="left:82px;top:630px;width:1px;height:25px;background:#905858"></div><div style="left:2px;top:629px;width:81px;height:1px;background:#aa98ae"></div><div style="left:82px;top:656px;width:1px;height:25px;background:#905858"></div><div style="left:2px;top:655px;width:81px;height:1px;background:#b28080"></div><div style="left:82px;top:682px;width:1px;height:25px;background:#905858"></div><div style="left:2px;top:681px;width:81px;height:1px;background:#b28080"></div><div class="c" style="left:2px;top:409px;width:80px;height:38px;line-height:38px;color:#3a3a3a">类型</div><div class="c" style="left:83px;top:409px;width:77px;height:38px;line-height:38px;color:#3a3a3a">日期</div><div class="c" style="left:161px;top:409px;width:110px;height:38px;line-height:38px;color:#3a3a3a">主场</div><div class="c" style="left:272px;top:409px;width:91px;height:38px;line-height:38px;color:#3a3a3a">比分<span class="p"><span class="n">(</span></span>半场<span class="p"><span class="n">)</span></span></div><div class="c" style="left:364px;top:409px;width:38px;height:38px;line-height:38px;color:#3a3a3a">角球</div><div class="c" style="left:403px;top:409px;width:95px;height:38px;line-height:38px;color:#3a3a3a">客场</div><div class="c" style="left:499px;top:429px;width:45px;height:18px;line-height:18px;color:#3a3a3a">主</div><div class="c" style="left:545px;top:429px;width:93px;height:18px;line-height:18px;color:#3a3a3a">让球</div><div class="c" style="left:639px;top:429px;width:47px;height:18px;line-height:18px;color:#3a3a3a">客</div><div class="c" style="left:687px;top:429px;width:66px;height:18px;line-height:18px;color:#3a3a3a">主</div><div class="c" style="left:754px;top:429px;width:67px;height:18px;line-height:18px;color:#3a3a3a">和</div><div class="c" style="left:822px;top:429px;width:68px;height:18px;line-height:18px;color:#3a3a3a">客</div><div class="c" style="left:891px;top:429px;width:38px;height:18px;line-height:18px;color:#3a3a3a">胜负</div><div class="c" style="left:930px;top:429px;width:38px;height:18px;line-height:18px;color:#3a3a3a">让球</div><div class="c" style="left:969px;top:429px;width:59px;height:18px;line-height:18px;color:#3a3a3a">进球数</div><div class="c" style="left:2px;top:448px;width:80px;height:25px;line-height:25px;color:#fff">欧国联</div><div class="c" style="left:83px;top:448px;width:77px;height:25px;line-height:25px;"><span class="n">24-10-11</span></div><div class="c" style="left:161px;top:448px;width:110px;height:25px;line-height:25px;"><span class="g">摩尔多瓦</span></div><div class="c" style="left:272px;top:448px;width:91px;height:25px;line-height:25px;"><span class="sc"><span class="r"><span class="n">2-0</span></span><span class="n">(1-0)</span></span></div><div class="c" style="left:364px;top:448px;width:38px;height:25px;line-height:25px;"><span class="n">2-5</span></div><div class="c" style="left:403px;top:448px;width:95px;height:25px;line-height:25px;">安道尔</div><div class="c" style="left:499px;top:448px;width:45px;height:25px;line-height:25px;"><span class="n">0.80</span></div><div class="c" style="left:545px;top:448px;width:93px;height:25px;line-height:25px;">一球</div><div class="c" style="left:639px;top:448px;width:47px;height:25px;line-height:25px;"><span class="n">1.09</span></div><div class="c" style="left:687px;top:448px;width:66px;height:25px;line-height:25px;"><span class="n">1.39</span></div><div class="c" style="left:754px;top:448px;width:67px;height:25px;line-height:25px;"><span class="n">3.96</span></div><div class="c" style="left:822px;top:448px;width:68px;height:25px;line-height:25px;"><span class="n">10.77</span></div><div class="c" style="left:891px;top:448px;width:38px;height:25px;line-height:25px;"><span class="r">胜</span></div><div class="c" style="left:930px;top:448px;width:38px;height:25px;line-height:25px;"><span class="r">赢</span></div><div class="c" style="left:969px;top:448px;width:59px;height:25px;line-height:25px;"><span class="r">大</span></div><div class="c" style="left:2px;top:474px;width:80px;height:25px;line-height:25px;color:#fff">国际友谊</div><div class="c" style="left:83px;top:474px;width:77px;height:25px;line-height:25px;"><span class="n">24-09-11</span></div><div class="c" style="left:161px;top:474px;width:110px;height:25px;line-height:25px;"><span class="g">摩尔多瓦</span></div><div class="c" style="left:272px;top:474px;width:91px;height:25px;line-height:25px;"><span class="sc"><span class="r"><span class="n">1-0</span></span><span class="n">(1-0)</span></span></div><div class="c" style="left:364px;top:474px;width:38px;height:25px;line-height:25px;"><span class="n">5-1</span></div><div class="c" style="left:403px;top:474px;width:95px;height:25px;line-height:25px;">圣马力诺</div><div class="c" style="left:499px;top:474px;width:45px;height:25px;line-height:25px;"><span class="n">0.85</span></div><div class="c" style="left:545px;top:474px;width:93px;height:25px;line-height:25px;">两球</div><div class="c" style="left:639px;top:474px;width:47px;height:25px;line-height:25px;"><span class="n">0.97</span></div><div class="c" style="left:687px;top:474px;width:66px;height:25px;line-height:25px;"><span class="n">1.13</span></div><div class="c" style="left:754px;top:474px;width:67px;height:25px;line-height:25px;"><span class="n">7.07</span></div><div class="c" style="left:822px;top:474px;width:68px;height:25px;line-height:25px;"><span class="n">20.26</span></div><div class="c" style="left:891px;top:474px;width:38px;height:25px;line-height:25px;"><span class="r">胜</span></div><div class="c" style="left:930px;top:474px;width:38px;height:25px;line-height:25px;"><span class="b">输</span></div><div class="c" style="left:969px;top:474px;width:59px;height:25px;line-height:25px;"><span class="b">小</span></div><div class="c" style="left:2px;top:500px;width:80px;height:25px;line-height:25px;color:#fff">欧国联</div><div class="c" style="left:83px;top:500px;width:77px;height:25px;line-height:25px;"><span class="n">24-09-08</span></div><div class="c" style="left:161px;top:500px;width:110px;height:25px;line-height:25px;"><span class="g">摩尔多瓦</span></div><div class="c" style="left:272px;top:500px;width:91px;height:25px;line-height:25px;"><span class="sc"><span class="r"><span class="n">2-0</span></span><span class="n">(2-0)</span></span></div><div class="c" style="left:364px;top:500px;width:38px;height:25px;line-height:25px;"><span class="n">3-0</span></div><div class="c" style="left:403px;top:500px;width:95px;height:25px;line-height:25px;">马耳他</div><div class="c" style="left:499px;top:500px;width:45px;height:25px;line-height:25px;"><span class="n">0.91</span></div><div class="c" style="left:545px;top:500px;width:93px;height:25px;line-height:25px;">半球</div><div class="c" style="left:639px;top:500px;width:47px;height:25px;line-height:25px;"><span class="n">0.98</span></div><div class="c" style="left:687px;top:500px;width:66px;height:25px;line-height:25px;"><span class="n">1.88</span></div><div class="c" style="left:754px;top:500px;width:67px;height:25px;line-height:25px;"><span class="n">3.13</span></div><div class="c" style="left:822px;top:500px;width:68px;height:25px;line-height:25px;"><span class="n">4.66</span></div><div class="c" style="left:891px;top:500px;width:38px;height:25px;line-height:25px;"><span class="r">胜</span></div><div class="c" style="left:930px;top:500px;width:38px;height:25px;line-height:25px;"><span class="r">赢</span></div><div class="c" style="left:969px;top:500px;width:59px;height:25px;line-height:25px;"><span class="r">大</span></div><div class="c" style="left:2px;top:526px;width:80px;height:25px;line-height:25px;color:#fff">国际友谊</div><div class="c" style="left:83px;top:526px;width:77px;height:25px;line-height:25px;"><span class="n">24-06-11</span></div><div class="c" style="left:161px;top:526px;width:110px;height:25px;line-height:25px;"><span class="g">摩尔多瓦</span></div><div class="c" style="left:272px;top:526px;width:91px;height:25px;line-height:25px;"><span class="sc"><span class="r"><span class="n">0-4</span></span><span class="n">(0-2)</span></span></div><div class="c" style="left:364px;top:526px;width:38px;height:25px;line-height:25px;"><span class="n">5-3</span></div><div class="c" style="left:403px;top:526px;width:95px;height:25px;line-height:25px;">乌克兰</div><div class="c" style="left:499px;top:526px;width:45px;height:25px;line-height:25px;"><span class="n">1.00</span></div><div class="c" style="left:545px;top:526px;width:93px;height:25px;line-height:25px;">受一球</div><div class="c" style="left:639px;top:526px;width:47px;height:25px;line-height:25px;"><span class="n">0.88</span></div><div class="c" style="left:687px;top:526px;width:66px;height:25px;line-height:25px;"><span class="n">6.57</span></div><div class="c" style="left:754px;top:526px;width:67px;height:25px;line-height:25px;"><span class="n">4.12</span></div><div class="c" style="left:822px;top:526px;width:68px;height:25px;line-height:25px;"><span class="n">1.48</span></div><div class="c" style="left:891px;top:526px;width:38px;height:25px;line-height:25px;"><span class="b">负</span></div><div class="c" style="left:930px;top:526px;width:38px;height:25px;line-height:25px;"><span class="b">输</span></div><div class="c" style="left:969px;top:526px;width:59px;height:25px;line-height:25px;"><span class="r">大</span></div><div class="c" style="left:2px;top:552px;width:80px;height:25px;line-height:25px;color:#fff">国际友谊</div><div class="c" style="left:83px;top:552px;width:77px;height:25px;line-height:25px;"><span class="n">24-06-08</span></div><div class="c" style="left:161px;top:552px;width:110px;height:25px;line-height:25px;"><span class="g">摩尔多瓦</span></div><div class="c" style="left:272px;top:552px;width:91px;height:25px;line-height:25px;"><span class="sc"><span class="r"><span class="n">3-2</span></span><span class="n">(1-0)</span></span></div><div class="c" style="left:364px;top:552px;width:38px;height:25px;line-height:25px;"><span class="n">6-2</span></div><div class="c" style="left:403px;top:552px;width:95px;height:25px;line-height:25px;">塞浦路斯</div><div class="c" style="left:499px;top:552px;width:45px;height:25px;line-height:25px;"><span class="n">0.84</span></div><div class="c" style="left:545px;top:552px;width:93px;height:25px;line-height:25px;">平<span class="n">/</span>半</div><div class="c" style="left:639px;top:552px;width:47px;height:25px;line-height:25px;"><span class="n">1.04</span></div><div class="c" style="left:687px;top:552px;width:66px;height:25px;line-height:25px;"><span class="n">2.15</span></div><div class="c" style="left:754px;top:552px;width:67px;height:25px;line-height:25px;"><span class="n">3.08</span></div><div class="c" style="left:822px;top:552px;width:68px;height:25px;line-height:25px;"><span class="n">3.49</span></div><div class="c" style="left:891px;top:552px;width:38px;height:25px;line-height:25px;"><span class="r">胜</span></div><div class="c" style="left:930px;top:552px;width:38px;height:25px;line-height:25px;"><span class="r">赢</span></div><div class="c" style="left:969px;top:552px;width:59px;height:25px;line-height:25px;"><span class="r">大</span></div><div class="c" style="left:2px;top:578px;width:80px;height:25px;line-height:25px;color:#fff">国际友谊</div><div class="c" style="left:83px;top:578px;width:77px;height:25px;line-height:25px;"><span class="n">24-03-26</span></div><div class="c" style="left:161px;top:578px;width:110px;height:25px;line-height:25px;">开曼群岛<span class="p"><span class="n">(</span></span>中<span class="p"><span class="n">)</span></span></div><div class="c" style="left:272px;top:578px;width:91px;height:25px;line-height:25px;"><span class="sc"><span class="r"><span class="n">0-4</span></span><span class="n">(0-2)</span></span></div><div class="c" style="left:364px;top:578px;width:38px;height:25px;line-height:25px;"><span class="n">0-0</span></div><div class="c" style="left:403px;top:578px;width:95px;height:25px;line-height:25px;"><span class="g">摩尔多瓦</span></div><div class="c" style="left:499px;top:578px;width:45px;height:25px;line-height:25px;"><span class="n">1.33</span></div><div class="c" style="left:545px;top:578px;width:93px;height:25px;line-height:25px;">受四球半</div><div class="c" style="left:639px;top:578px;width:47px;height:25px;line-height:25px;"><span class="n">0.45</span></div><div class="c" style="left:687px;top:578px;width:66px;height:25px;line-height:25px;"><span class="n">62.32</span></div><div class="c" style="left:754px;top:578px;width:67px;height:25px;line-height:25px;"><span class="n">26.87</span></div><div class="c" style="left:822px;top:578px;width:68px;height:25px;line-height:25px;"><span class="n">1.01</span></div><div class="c" style="left:891px;top:578px;width:38px;height:25px;line-height:25px;"><span class="r">胜</span></div><div class="c" style="left:930px;top:578px;width:38px;height:25px;line-height:25px;"><span class="b">输</span></div><div class="c" style="left:969px;top:578px;width:59px;height:25px;line-height:25px;"><span class="b">小</span></div><div class="c" style="left:2px;top:604px;width:80px;height:25px;line-height:25px;color:#fff">国际友谊</div><div class="c" style="left:83px;top:604px;width:77px;height:25px;line-height:25px;"><span class="n">24-03-22</span></div><div class="c" style="left:161px;top:604px;width:110px;height:25px;line-height:25px;">北马其顿<span class="p"><span class="n">(</span></span>中<span class="p"><span class="n">)</span></span></div><div class="c" style="left:272px;top:604px;width:91px;height:25px;line-height:25px;"><span class="sc"><span class="r"><span class="n">1-1</span></span><span class="n">(1-0)</span></span></div><div class="c" style="left:364px;top:604px;width:38px;height:25px;line-height:25px;"><span class="n">3-2</span></div><div class="c" style="left:403px;top:604px;width:95px;height:25px;line-height:25px;"><span class="g">摩尔多瓦</span></div><div class="c" style="left:499px;top:604px;width:45px;height:25px;line-height:25px;"><span class="n">0.84</span></div><div class="c" style="left:545px;top:604px;width:93px;height:25px;line-height:25px;">半<span class="n">/</span>一</div><div class="c" style="left:639px;top:604px;width:47px;height:25px;line-height:25px;"><span class="n">0.98</span></div><div class="c" style="left:687px;top:604px;width:66px;height:25px;line-height:25px;"><span class="n">1.68</span></div><div class="c" style="left:754px;top:604px;width:67px;height:25px;line-height:25px;"><span class="n">3.63</span></div><div class="c" style="left:822px;top:604px;width:68px;height:25px;line-height:25px;"><span class="n">4.80</span></div><div class="c" style="left:891px;top:604px;width:38px;height:25px;line-height:25px;"><span class="g">平</span></div><div class="c" style="left:930px;top:604px;width:38px;height:25px;line-height:25px;"><span class="r">赢</span></div><div class="c" style="left:969px;top:604px;width:59px;height:25px;line-height:25px;"><span class="b">小</span></div><div class="c" style="left:2px;top:630px;width:80px;height:25px;line-height:25px;color:#fff">欧洲杯</div><div class="c" style="left:83px;top:630px;width:77px;height:25px;line-height:25px;"><span class="n">23-11-21</span></div><div class="c" style="left:161px;top:630px;width:110px;height:25px;line-height:25px;">捷克</div><div class="c" style="left:272px;top:630px;width:91px;height:25px;line-height:25px;"><span class="sc"><span class="r"><span class="n">3-0</span></span><span class="n">(1-0)</span></span></div><div class="c" style="left:364px;top:630px;width:38px;height:25px;line-height:25px;"><span class="n">4-4</span></div><div class="c" style="left:403px;top:630px;width:95px;height:25px;line-height:25px;"><span class="g">摩尔多瓦</span><span class="badge"><span class="n">1</span></span></div><div class="c" style="left:499px;top:630px;width:45px;height:25px;line-height:25px;"><span class="n">0.94</span></div><div class="c" style="left:545px;top:630px;width:93px;height:25px;line-height:25px;">球半<span class="n">/</span>两</div><div class="c" style="left:639px;top:630px;width:47px;height:25px;line-height:25px;"><span class="n">0.95</span></div><div class="c" style="left:687px;top:630px;width:66px;height:25px;line-height:25px;"><span class="n">1.23</span></div><div class="c" style="left:754px;top:630px;width:67px;height:25px;line-height:25px;"><span class="n">6.00</span></div><div class="c" style="left:822px;top:630px;width:68px;height:25px;line-height:25px;"><span class="n">12.47</span></div><div class="c" style="left:891px;top:630px;width:38px;height:25px;line-height:25px;"><span class="b">负</span></div><div class="c" style="left:930px;top:630px;width:38px;height:25px;line-height:25px;"><span class="b">输</span></div><div class="c" style="left:969px;top:630px;width:59px;height:25px;line-height:25px;"><span class="r">大</span></div><div class="c" style="left:2px;top:656px;width:80px;height:25px;line-height:25px;color:#fff">欧洲杯</div><div class="c" style="left:83px;top:656px;width:77px;height:25px;line-height:25px;"><span class="n">23-11-18</span></div><div class="c" style="left:161px;top:656px;width:110px;height:25px;line-height:25px;"><span class="g">摩尔多瓦</span></div><div class="c" style="left:272px;top:656px;width:91px;height:25px;line-height:25px;"><span class="sc"><span class="r"><span class="n">1-1</span></span><span class="n">(0-1)</span></span></div><div class="c" style="left:364px;top:656px;width:38px;height:25px;line-height:25px;"><span class="n">4-2</span></div><div class="c" style="left:403px;top:656px;width:95px;height:25px;line-height:25px;">阿尔巴尼亚</div><div class="c" style="left:499px;top:656px;width:45px;height:25px;line-height:25px;"><span class="n">0.89</span></div><div class="c" style="left:545px;top:656px;width:93px;height:25px;line-height:25px;">受半球</div><div class="c" style="left:639px;top:656px;width:47px;height:25px;line-height:25px;"><span class="n">1.00</span></div><div class="c" style="left:687px;top:656px;width:66px;height:25px;line-height:25px;"><span class="n">4.57</span></div><div class="c" style="left:754px;top:656px;width:67px;height:25px;line-height:25px;"><span class="n">3.20</span></div><div class="c" style="left:822px;top:656px;width:68px;height:25px;line-height:25px;"><span class="n">1.89</span></div><div class="c" style="left:891px;top:656px;width:38px;height:25px;line-height:25px;"><span class="g">平</span></div><div class="c" style="left:930px;top:656px;width:38px;height:25px;line-height:25px;"><span class="r">赢</span></div><div class="c" style="left:969px;top:656px;width:59px;height:25px;line-height:25px;"><span class="r">大</span></div><div class="c" style="left:2px;top:682px;width:80px;height:25px;line-height:25px;color:#fff">欧洲杯</div><div class="c" style="left:83px;top:682px;width:77px;height:25px;line-height:25px;"><span class="n">23-10-16</span></div><div class="c" style="left:161px;top:682px;width:110px;height:25px;line-height:25px;">波兰</div><div class="c" style="left:272px;top:682px;width:91px;height:25px;line-height:25px;"><span class="sc"><span class="r"><span class="n">1-1</span></span><span class="n">(0-1)</span></span></div><div class="c" style="left:364px;top:682px;width:38px;height:25px;line-height:25px;"><span class="n">8-6</span></div><div class="c" style="left:403px;top:682px;width:95px;height:25px;line-height:25px;"><span class="g">摩尔多瓦</span></div><div class="c" style="left:499px;top:682px;width:45px;height:25px;line-height:25px;"><span class="n">0.94</span></div><div class="c" style="left:545px;top:682px;width:93px;height:25px;line-height:25px;">球半</div><div class="c" style="left:639px;top:682px;width:47px;height:25px;line-height:25px;"><span class="n">0.95</span></div><div class="c" style="left:687px;top:682px;width:66px;height:25px;line-height:25px;"><span class="n">1.24</span></div><div class="c" style="left:754px;top:682px;width:67px;height:25px;line-height:25px;"><span class="n">5.61</span></div><div class="c" style="left:822px;top:682px;width:68px;height:25px;line-height:25px;"><span class="n">13.70</span></div><div class="c" style="left:891px;top:682px;width:38px;height:25px;line-height:25px;"><span class="g">平</span></div><div class="c" style="left:930px;top:682px;width:38px;height:25px;line-height:25px;"><span class="r">赢</span></div><div class="c" style="left:969px;top:682px;width:59px;height:25px;line-height:25px;"><span class="b">小</span></div><div class="c" style="left:2px;top:708px;width:1026px;height:25px;line-height:25px;letter-spacing:0.24px">近<span class="r"><span class="n">10</span></span>场,胜<span class="n">5</span>平<span class="n">3</span>负<span class="n">2</span>, 胜率<span class="n">:</span><span class="r"><span class="n">50%</span></span> 让胜率<span class="n">:</span><span class="r"><span class="n">60%</span></span> 大率<span class="n">:</span><span class="r"><span class="n">60%</span></span> 单率<span class="n">:</span><span class="r"><span class="n">30%</span></span></div><div class="sel" style="left:532px;top:409px;width:61px;height:19px;font-size:13px;line-height:18px">Crow*<svg width="10" height="7" viewBox="0 0 10 7" style="position:absolute;right:4px;top:6px"><path d="M0.9 1.2 L5 5.2 L9.1 1.2" fill="none" stroke="#000" stroke-width="1.9"/></svg></div><div class="sel" style="left:601px;top:409px;width:51px;height:19px;font-size:13px;line-height:18px">终指<svg width="10" height="7" viewBox="0 0 10 7" style="position:absolute;right:4px;top:6px"><path d="M0.9 1.2 L5 5.2 L9.1 1.2" fill="none" stroke="#000" stroke-width="1.9"/></svg></div><div class="sel" style="left:724px;top:409px;width:70px;height:19px;font-size:13px;line-height:18px">平均值&nbsp;<svg width="10" height="7" viewBox="0 0 10 7" style="position:absolute;right:4px;top:6px"><path d="M0.9 1.2 L5 5.2 L9.1 1.2" fill="none" stroke="#000" stroke-width="1.9"/></svg></div><div class="sel" style="left:801px;top:409px;width:51px;height:19px;font-size:13px;line-height:18px">终指<svg width="10" height="7" viewBox="0 0 10 7" style="position:absolute;right:4px;top:6px"><path d="M0.9 1.2 L5 5.2 L9.1 1.2" fill="none" stroke="#000" stroke-width="1.9"/></svg></div><div class="sel" style="left:934px;top:409px;width:51px;height:19px;font-size:13px;line-height:18px">全场<svg width="10" height="7" viewBox="0 0 10 7" style="position:absolute;right:4px;top:6px"><path d="M0.9 1.2 L5 5.2 L9.1 1.2" fill="none" stroke="#000" stroke-width="1.9"/></svg></div>
</body></html>
